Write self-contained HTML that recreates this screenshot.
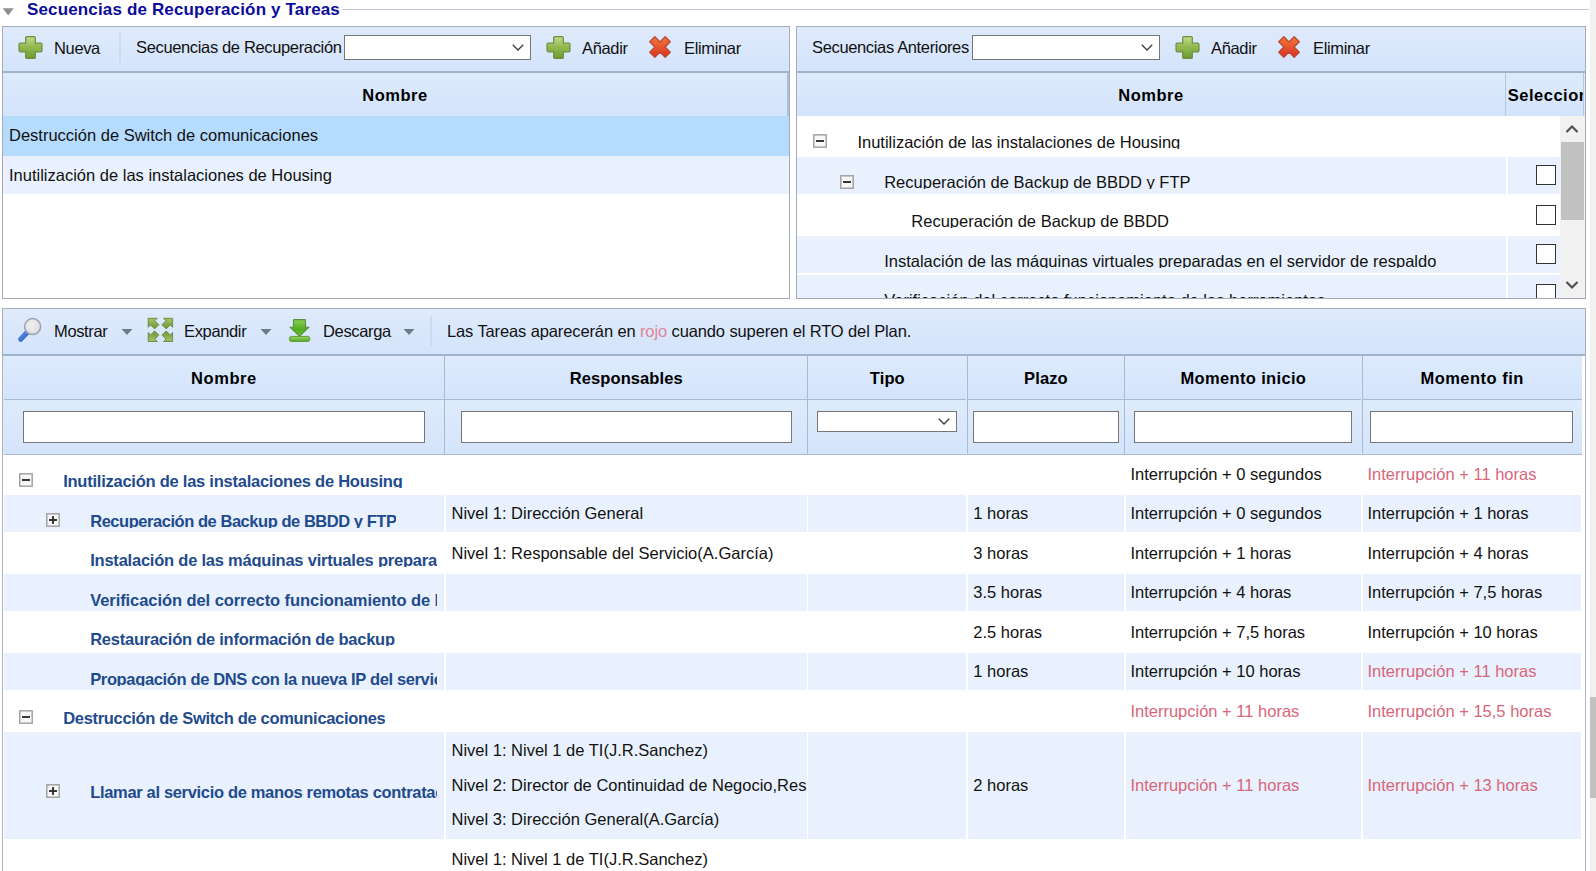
<!DOCTYPE html>
<html><head><meta charset="utf-8"><title>Secuencias</title>
<style>
*{box-sizing:border-box;margin:0;padding:0}
html,body{width:1596px;height:871px;overflow:hidden;background:#fff}
body{font-family:"Liberation Sans",sans-serif;font-size:16.5px;color:#000;position:relative}
.abs{position:absolute}
.tb{position:absolute;background:linear-gradient(#dfeafb,#d4e4fc);border:1px solid #a6adb9;}
.tbt{position:absolute;font-size:16.5px;color:#111;white-space:nowrap;letter-spacing:-0.35px;line-height:19px}
.hd{position:absolute;background:linear-gradient(#deebfd,#d3e3fb);font-weight:bold;font-size:16.5px;text-align:center;white-space:nowrap;color:#000}
.bg{position:absolute}
.alt{background:#e8f1fd}
.sel{background:#b5dcff}
.t{position:absolute;white-space:nowrap;font-size:16.5px;line-height:19px;color:#111}
.red{color:#d8667a}
.nm{position:absolute;white-space:nowrap;font-size:16.5px;line-height:19px;height:16px;font-weight:bold;color:#1f4b8e;overflow:hidden;letter-spacing:-0.28px}
.tr{position:absolute;white-space:nowrap;font-size:16.5px;line-height:19px;height:16px;color:#111;overflow:hidden}
.inp{position:absolute;background:#fff;border:1.5px solid #767676}
.cb{position:absolute;width:20px;height:20px;background:#fff;border:1.5px solid #333}
.pm{position:absolute;width:13.5px;height:13.5px;border:1.8px solid #959595;background:#f7f7f7}
.pm:before{content:"";position:absolute;left:1.8px;right:1.8px;top:4.1px;height:1.7px;background:#2a2a2a}
.pm.plus:after{content:"";position:absolute;top:1.8px;bottom:1.8px;left:4.1px;width:1.7px;background:#2a2a2a}
.vl{position:absolute;width:1.5px;background:#fff}
</style></head><body>

<div class="abs" style="left:0;top:8.7px;width:1589px;height:1.5px;background:#c3c9d4"></div>
<div class="abs" style="left:0;top:0;width:342px;height:22px;background:#fff"></div>
<svg class="abs" style="left:2px;top:7px" width="13" height="10"><path d="M0.7 1.3 L11.8 1.3 L6.25 8.5 Z" fill="#8f8f8f"/></svg>
<div class="abs" style="left:27px;top:0px;font-size:17px;line-height:20px;font-weight:bold;color:#0c0c9c;white-space:nowrap;letter-spacing:0.15px">Secuencias de Recuperación y Tareas</div>
<div class="abs" style="left:2px;top:25.5px;width:788px;height:273px;border:1px solid #a4abb7;background:#fff"></div>
<div class="tb" style="left:2px;top:25.5px;width:788px;height:47.5px;border-bottom:2px solid #9fb3cd"></div>
<div class="hd" style="left:3px;top:73px;width:786px;height:43px;line-height:44.5px;border-right:2px solid #a9bfdc;letter-spacing:0.55px">Nombre</div>
<div class="bg sel" style="left:3px;top:116px;width:786px;height:40px"></div><div class="t" style="left:9px;top:126px">Destrucción de Switch de comunicaciones</div>
<div class="bg alt" style="left:3px;top:156px;width:786px;height:38.2px"></div><div class="t" style="left:9px;top:166px">Inutilización de las instalaciones de Housing</div>
<svg class="abs" style="left:17px;top:34px;margin:0.5px" width="25" height="25" viewBox="0 0 26 26"><defs><linearGradient id="g1" x1="0" y1="0" x2="0" y2="1"><stop offset="0" stop-color="#c3df8c"/><stop offset="0.45" stop-color="#94bb52"/><stop offset="1" stop-color="#6c9a33"/></linearGradient></defs><path d="M9.3 1.6h7.4a1.3 1.3 0 0 1 1.3 1.3v5.6h5.6a1.3 1.3 0 0 1 1.3 1.3v6.4a1.3 1.3 0 0 1-1.3 1.3h-5.6v5.6a1.3 1.3 0 0 1-1.3 1.3h-7.4a1.3 1.3 0 0 1-1.3-1.3v-5.6h-5.6a1.3 1.3 0 0 1-1.3-1.3v-6.4a1.3 1.3 0 0 1 1.3-1.3h5.6v-5.6a1.3 1.3 0 0 1 1.3-1.3z" fill="url(#g1)" stroke="#6f8f40" stroke-width="1.3"/></svg>
<div class="tbt" style="left:54px;top:39px">Nueva</div>
<div class="abs" style="left:119px;top:33px;width:1.5px;height:30px;background:#cddaf0"></div>
<div class="tbt" style="left:136px;top:38px">Secuencias de Recuperación</div>
<div class="inp" style="left:344px;top:35px;width:187px;height:25px"></div><svg class="abs" style="left:511px;top:43px" width="14" height="9" viewBox="0 0 14 9"><path d="M1.8 1.8 L7 7 L12.2 1.8" fill="none" stroke="#3a3a3a" stroke-width="1.3"/></svg>
<svg class="abs" style="left:545px;top:34px;margin:0.5px" width="25" height="25" viewBox="0 0 26 26"><defs><linearGradient id="g2" x1="0" y1="0" x2="0" y2="1"><stop offset="0" stop-color="#c3df8c"/><stop offset="0.45" stop-color="#94bb52"/><stop offset="1" stop-color="#6c9a33"/></linearGradient></defs><path d="M9.3 1.6h7.4a1.3 1.3 0 0 1 1.3 1.3v5.6h5.6a1.3 1.3 0 0 1 1.3 1.3v6.4a1.3 1.3 0 0 1-1.3 1.3h-5.6v5.6a1.3 1.3 0 0 1-1.3 1.3h-7.4a1.3 1.3 0 0 1-1.3-1.3v-5.6h-5.6a1.3 1.3 0 0 1-1.3-1.3v-6.4a1.3 1.3 0 0 1 1.3-1.3h5.6v-5.6a1.3 1.3 0 0 1 1.3-1.3z" fill="url(#g2)" stroke="#6f8f40" stroke-width="1.3"/></svg>
<div class="tbt" style="left:582px;top:39px">Añadir</div>
<svg class="abs" style="left:647px;top:34px" width="26" height="26" viewBox="0 0 26 26"><defs><linearGradient id="r1" x1="0" y1="0" x2="0" y2="1"><stop offset="0" stop-color="#f07a3a"/><stop offset="0.5" stop-color="#e5562c"/><stop offset="1" stop-color="#d8301e"/></linearGradient></defs><path d="M18.16 2.75 L23.25 7.84 L18.09 13.00 L23.25 18.16 L18.16 23.25 L13.00 18.09 L7.84 23.25 L2.75 18.16 L7.91 13.00 L2.75 7.84 L7.84 2.75 L13.00 7.91 Z" fill="url(#r1)" stroke="#bd4a36" stroke-width="1.4" stroke-linejoin="round"/></svg>
<div class="tbt" style="left:684px;top:39px">Eliminar</div>
<div class="abs" style="left:796px;top:25.5px;width:790px;height:273px;border:1px solid #a4abb7;background:#fff"></div>
<div class="tb" style="left:796px;top:25.5px;width:790px;height:47.5px;border-bottom:2px solid #9fb3cd"></div>
<div class="hd" style="left:797px;top:73px;width:708px;height:43px;line-height:44.5px;letter-spacing:0.55px">Nombre</div>
<div class="hd" style="left:1504.8px;top:73px;width:79.5px;height:43px;line-height:44.5px;border-left:1.5px solid #b3c6e2;border-right:1.3px solid #b3c6e2;text-align:left;padding-left:2px;overflow:hidden;letter-spacing:0.5px">Seleccionar</div><div class="abs" style="left:1584.3px;top:73px;width:1px;height:43px;background:#dce8fa"></div>
<div class="tbt" style="left:812px;top:38px">Secuencias Anteriores</div>
<div class="inp" style="left:972px;top:35px;width:188px;height:25px"></div><svg class="abs" style="left:1140px;top:43px" width="14" height="9" viewBox="0 0 14 9"><path d="M1.8 1.8 L7 7 L12.2 1.8" fill="none" stroke="#3a3a3a" stroke-width="1.3"/></svg>
<svg class="abs" style="left:1174px;top:34px;margin:0.5px" width="25" height="25" viewBox="0 0 26 26"><defs><linearGradient id="g3" x1="0" y1="0" x2="0" y2="1"><stop offset="0" stop-color="#c3df8c"/><stop offset="0.45" stop-color="#94bb52"/><stop offset="1" stop-color="#6c9a33"/></linearGradient></defs><path d="M9.3 1.6h7.4a1.3 1.3 0 0 1 1.3 1.3v5.6h5.6a1.3 1.3 0 0 1 1.3 1.3v6.4a1.3 1.3 0 0 1-1.3 1.3h-5.6v5.6a1.3 1.3 0 0 1-1.3 1.3h-7.4a1.3 1.3 0 0 1-1.3-1.3v-5.6h-5.6a1.3 1.3 0 0 1-1.3-1.3v-6.4a1.3 1.3 0 0 1 1.3-1.3h5.6v-5.6a1.3 1.3 0 0 1 1.3-1.3z" fill="url(#g3)" stroke="#6f8f40" stroke-width="1.3"/></svg>
<div class="tbt" style="left:1211px;top:39px">Añadir</div>
<svg class="abs" style="left:1276px;top:34px" width="26" height="26" viewBox="0 0 26 26"><defs><linearGradient id="r2" x1="0" y1="0" x2="0" y2="1"><stop offset="0" stop-color="#f07a3a"/><stop offset="0.5" stop-color="#e5562c"/><stop offset="1" stop-color="#d8301e"/></linearGradient></defs><path d="M18.16 2.75 L23.25 7.84 L18.09 13.00 L23.25 18.16 L18.16 23.25 L13.00 18.09 L7.84 23.25 L2.75 18.16 L7.91 13.00 L2.75 7.84 L7.84 2.75 L13.00 7.91 Z" fill="url(#r2)" stroke="#bd4a36" stroke-width="1.4" stroke-linejoin="round"/></svg>
<div class="tbt" style="left:1313px;top:39px">Eliminar</div>
<div class="abs" style="left:797px;top:116px;width:788px;height:182.5px;overflow:hidden">
<div class="bg alt" style="left:0;top:41px;width:709px;height:37.3px"></div>
<div class="bg alt" style="left:710.5px;top:41px;width:52px;height:37.3px"></div>
<div class="bg alt" style="left:0;top:120px;width:709px;height:37.3px"></div>
<div class="bg alt" style="left:710.5px;top:120px;width:52px;height:37.3px"></div>
<div class="bg alt" style="left:0;top:159px;width:709px;height:37.3px"></div>
<div class="bg alt" style="left:710.5px;top:159px;width:52px;height:37.3px"></div>
<div class="tr" style="left:60.39999999999998px;top:16.80000000000001px">Inutilización de las instalaciones de Housing</div>
<div class="tr" style="left:87.20000000000005px;top:56.80000000000001px">Recuperación de Backup de BBDD y FTP</div>
<div class="tr" style="left:114.29999999999995px;top:95.80000000000001px">Recuperación de Backup de BBDD</div>
<div class="tr" style="left:87.20000000000005px;top:135.8px">Instalación de las máquinas virtuales preparadas en el servidor de respaldo</div>
<div class="tr" style="left:87.20000000000005px;top:175.40000000000003px">Verificación del correcto funcionamiento de las herramientas</div>
<svg class="abs" style="left:16.299999999999955px;top:18.30000000000001px" width="14" height="14" viewBox="0 0 14 14"><rect x="0.8" y="0.8" width="12.4" height="12.4" fill="#f7f7f7" stroke="#a0a0a0" stroke-width="1.45"/><rect x="3" y="6.05" width="8" height="1.9" fill="#2e2e2e"/></svg>
<svg class="abs" style="left:43.299999999999955px;top:58.5px" width="14" height="14" viewBox="0 0 14 14"><rect x="0.8" y="0.8" width="12.4" height="12.4" fill="#f7f7f7" stroke="#a0a0a0" stroke-width="1.45"/><rect x="3" y="6.05" width="8" height="1.9" fill="#2e2e2e"/></svg>
<div class="cb" style="left:739px;top:49px"></div>
<div class="cb" style="left:739px;top:89px"></div>
<div class="cb" style="left:739px;top:128px"></div>
<div class="cb" style="left:739px;top:167.7px"></div>
<div class="abs" style="left:763px;top:0;width:24.5px;height:182px;background:#f1f1f1"></div>
<div class="abs" style="left:763.5px;top:26px;width:23.5px;height:78px;background:#c1c1c1"></div>
<svg class="abs" style="left:768px;top:8px" width="14" height="10" viewBox="0 0 14 10"><path d="M1.5 8 L7 2.5 L12.5 8" fill="none" stroke="#505050" stroke-width="2.2"/></svg>
<svg class="abs" style="left:768px;top:164px" width="14" height="10" viewBox="0 0 14 10"><path d="M1.5 2 L7 7.5 L12.5 2" fill="none" stroke="#505050" stroke-width="2.2"/></svg>
</div>
<div class="abs" style="left:796px;top:297.5px;width:790px;height:1px;background:#a4abb7"></div>
<div class="abs" style="left:3px;top:354.5px;width:1579px;height:100px;background:#dbe7fa"></div>
<div class="tb" style="left:2px;top:308px;width:1584px;height:47.5px;border-bottom:2px solid #9fb3cd"></div>
<div class="tbt" style="left:54px;top:322px">Mostrar</div>
<div class="tbt" style="left:184px;top:322px">Expandir</div>
<div class="tbt" style="left:323px;top:322px">Descarga</div>
<div class="abs" style="left:430px;top:316px;width:1.5px;height:30px;background:#cddaf0"></div>
<div class="tbt" style="left:447px;top:322px;letter-spacing:-0.12px">Las Tareas aparecerán en <span style="color:#df8594">rojo</span> cuando superen el RTO del Plan.</div>
<svg class="abs" style="left:121px;top:328px" width="12" height="8"><path d="M0.5 1 L11.5 1 L6 7 Z" fill="#6a7a90"/></svg>
<svg class="abs" style="left:260px;top:328px" width="12" height="8"><path d="M0.5 1 L11.5 1 L6 7 Z" fill="#6a7a90"/></svg>
<svg class="abs" style="left:403px;top:328px" width="12" height="8"><path d="M0.5 1 L11.5 1 L6 7 Z" fill="#6a7a90"/></svg>
<svg class="abs" style="left:14px;top:314px" width="32" height="32" viewBox="14 314 32 32"><defs><radialGradient id="lens" cx="0.45" cy="0.4" r="0.6"><stop offset="0" stop-color="#f2f1f1"/><stop offset="1" stop-color="#dcdde2"/></radialGradient><linearGradient id="hnd" x1="0" y1="0" x2="1" y2="1"><stop offset="0" stop-color="#5b8fe6"/><stop offset="1" stop-color="#2f62c4"/></linearGradient></defs><path d="M27.2 332.4 L20.6 339.2" stroke="url(#hnd)" stroke-width="5.2" stroke-linecap="round" fill="none"/><circle cx="32.6" cy="326.6" r="8" fill="url(#lens)" stroke="#9aa2b0" stroke-width="1.5"/></svg>
<svg class="abs" style="left:146px;top:316px" width="30" height="28" viewBox="146 316 30 28"><defs><linearGradient id="ex" x1="0" y1="0" x2="0" y2="1"><stop offset="0" stop-color="#a5c46a"/><stop offset="1" stop-color="#6f9436"/></linearGradient></defs><g fill="url(#ex)" stroke="#68873a" stroke-width="0.9" stroke-linejoin="round"><path transform="translate(148.2 318.3)" d="M0 0 L9 0 L6.6 2.4 L10.6 6.4 L6.4 10.6 L2.4 6.6 L0 9 Z"/><path transform="translate(172.6 318.3) scale(-1 1)" d="M0 0 L9 0 L6.6 2.4 L10.6 6.4 L6.4 10.6 L2.4 6.6 L0 9 Z"/><path transform="translate(148.2 341.5) scale(1 -1)" d="M0 0 L9 0 L6.6 2.4 L10.6 6.4 L6.4 10.6 L2.4 6.6 L0 9 Z"/><path transform="translate(172.6 341.5) scale(-1 -1)" d="M0 0 L9 0 L6.6 2.4 L10.6 6.4 L6.4 10.6 L2.4 6.6 L0 9 Z"/></g></svg>
<svg class="abs" style="left:286px;top:316px" width="28" height="28" viewBox="286 316 28 28"><defs><linearGradient id="dl" x1="0" y1="0" x2="0" y2="1"><stop offset="0" stop-color="#8ed05a"/><stop offset="0.6" stop-color="#4fae1c"/><stop offset="1" stop-color="#6ec23c"/></linearGradient><linearGradient id="dlb" x1="0" y1="0" x2="0" y2="1"><stop offset="0" stop-color="#9ad865"/><stop offset="1" stop-color="#5aa52a"/></linearGradient></defs><path d="M294.3 319.6 h10.4 a0.8 0.8 0 0 1 0.8 0.8 v6.8 h3.6 l-9.6 9 l-9.6 -9 h3.6 v-6.8 a0.8 0.8 0 0 1 0.8 -0.8 z" fill="url(#dl)" stroke="#5a8f3a" stroke-width="1.1" stroke-linejoin="round"/><rect x="289.4" y="336.4" width="20.4" height="5" rx="2" fill="url(#dlb)" stroke="#5a9a30" stroke-width="1"/></svg>
<div class="abs" style="left:2px;top:355px;width:1583.5px;height:520px;border-left:1.5px solid #adb3bd;border-right:1.5px solid #adb8c8"></div>
<div class="hd" style="left:3.5px;top:355.5px;width:440.9px;height:44px;line-height:45px;border-bottom:1.5px solid #a9b9d0;letter-spacing:0.55px">Nombre</div>
<div class="abs" style="left:3.5px;top:399.5px;width:440.9px;height:55px;background:linear-gradient(#deebfc,#d4e4fb);border-bottom:1.5px solid #a9b9d0"></div>
<div class="hd" style="left:444.4px;top:355.5px;width:362.70000000000005px;height:44px;line-height:45px;border-left:1.5px solid #a9b9d0;border-bottom:1.5px solid #a9b9d0;letter-spacing:0.08px">Responsables</div>
<div class="abs" style="left:444.4px;top:399.5px;width:362.70000000000005px;height:55px;background:linear-gradient(#deebfc,#d4e4fb);border-left:1.5px solid #a9b9d0;border-bottom:1.5px solid #a9b9d0"></div>
<div class="hd" style="left:807.1px;top:355.5px;width:159.39999999999998px;height:44px;line-height:45px;border-left:1.5px solid #a9b9d0;border-bottom:1.5px solid #a9b9d0;letter-spacing:0.12px">Tipo</div>
<div class="abs" style="left:807.1px;top:399.5px;width:159.39999999999998px;height:55px;background:linear-gradient(#deebfc,#d4e4fb);border-left:1.5px solid #a9b9d0;border-bottom:1.5px solid #a9b9d0"></div>
<div class="hd" style="left:966.5px;top:355.5px;width:157.79999999999995px;height:44px;line-height:45px;border-left:1.5px solid #a9b9d0;border-bottom:1.5px solid #a9b9d0;letter-spacing:0.12px">Plazo</div>
<div class="abs" style="left:966.5px;top:399.5px;width:157.79999999999995px;height:55px;background:linear-gradient(#deebfc,#d4e4fb);border-left:1.5px solid #a9b9d0;border-bottom:1.5px solid #a9b9d0"></div>
<div class="hd" style="left:1124.3px;top:355.5px;width:237.20000000000005px;height:44px;line-height:45px;border-left:1.5px solid #a9b9d0;border-bottom:1.5px solid #a9b9d0;letter-spacing:0.34px">Momento inicio</div>
<div class="abs" style="left:1124.3px;top:399.5px;width:237.20000000000005px;height:55px;background:linear-gradient(#deebfc,#d4e4fb);border-left:1.5px solid #a9b9d0;border-bottom:1.5px solid #a9b9d0"></div>
<div class="hd" style="left:1361.5px;top:355.5px;width:220.29999999999995px;height:44px;line-height:45px;border-left:1.5px solid #a9b9d0;border-bottom:1.5px solid #a9b9d0;letter-spacing:0.49px">Momento fin</div>
<div class="abs" style="left:1361.5px;top:399.5px;width:220.29999999999995px;height:55px;background:linear-gradient(#deebfc,#d4e4fb);border-left:1.5px solid #a9b9d0;border-bottom:1.5px solid #a9b9d0"></div>
<div class="inp" style="left:23px;top:411px;width:402px;height:31.7px"></div>
<div class="inp" style="left:461.3px;top:411px;width:330.40000000000003px;height:31.7px"></div>
<div class="inp" style="left:973.3px;top:411px;width:145.4000000000001px;height:31.7px"></div>
<div class="inp" style="left:1134px;top:411px;width:217.79999999999995px;height:31.7px"></div>
<div class="inp" style="left:1370px;top:411px;width:202.79999999999995px;height:31.7px"></div>
<div class="inp" style="left:817.3px;top:411px;width:140.2px;height:20.5px"></div><svg class="abs" style="left:936.5px;top:417px" width="14" height="9" viewBox="0 0 14 9"><path d="M1.8 1.8 L7 7 L12.2 1.8" fill="none" stroke="#3a3a3a" stroke-width="1.3"/></svg>
<div class="bg alt" style="left:3.5px;top:494.7px;width:1577px;height:37.70000000000006px"></div>
<div class="vl" style="left:444.2px;top:494.7px;height:39.50000000000006px"></div>
<div class="vl" style="left:806.9px;top:494.7px;height:39.50000000000006px"></div>
<div class="vl" style="left:966.3px;top:494.7px;height:39.50000000000006px"></div>
<div class="vl" style="left:1124.1px;top:494.7px;height:39.50000000000006px"></div>
<div class="vl" style="left:1361.3px;top:494.7px;height:39.50000000000006px"></div>
<div class="bg alt" style="left:3.5px;top:573.9px;width:1577px;height:37.59999999999998px"></div>
<div class="vl" style="left:444.2px;top:573.9px;height:39.39999999999998px"></div>
<div class="vl" style="left:806.9px;top:573.9px;height:39.39999999999998px"></div>
<div class="vl" style="left:966.3px;top:573.9px;height:39.39999999999998px"></div>
<div class="vl" style="left:1124.1px;top:573.9px;height:39.39999999999998px"></div>
<div class="vl" style="left:1361.3px;top:573.9px;height:39.39999999999998px"></div>
<div class="bg alt" style="left:3.5px;top:652.8px;width:1577px;height:37.600000000000094px"></div>
<div class="vl" style="left:444.2px;top:652.8px;height:39.40000000000009px"></div>
<div class="vl" style="left:806.9px;top:652.8px;height:39.40000000000009px"></div>
<div class="vl" style="left:966.3px;top:652.8px;height:39.40000000000009px"></div>
<div class="vl" style="left:1124.1px;top:652.8px;height:39.40000000000009px"></div>
<div class="vl" style="left:1361.3px;top:652.8px;height:39.40000000000009px"></div>
<div class="bg alt" style="left:3.5px;top:731.9px;width:1577px;height:107.09999999999998px"></div>
<div class="vl" style="left:444.2px;top:731.9px;height:108.89999999999998px"></div>
<div class="vl" style="left:806.9px;top:731.9px;height:108.89999999999998px"></div>
<div class="vl" style="left:966.3px;top:731.9px;height:108.89999999999998px"></div>
<div class="vl" style="left:1124.1px;top:731.9px;height:108.89999999999998px"></div>
<div class="vl" style="left:1361.3px;top:731.9px;height:108.89999999999998px"></div>
<div class="nm" style="left:63.2px;top:471.8px;max-width:374.2px;letter-spacing:-0.243px">Inutilización de las instalaciones de Housing</div>
<div class="nm" style="left:90.2px;top:511.8px;max-width:347.2px;letter-spacing:-0.457px">Recuperación de Backup de BBDD y FTP</div>
<div class="nm" style="left:90.2px;top:551.1999999999999px;max-width:347.2px;letter-spacing:-0.223px">Instalación de las máquinas virtuales preparadas en el servidor de respaldo</div>
<div class="nm" style="left:90.2px;top:591.0999999999999px;max-width:347.2px;letter-spacing:-0.07px">Verificación del correcto funcionamiento de las herramientas</div>
<div class="nm" style="left:90.2px;top:629.8px;max-width:347.2px;letter-spacing:-0.243px">Restauración de información de backup</div>
<div class="nm" style="left:90.2px;top:669.5px;max-width:347.2px;letter-spacing:-0.356px">Propagación de DNS con la nueva IP del servicio</div>
<div class="nm" style="left:63.2px;top:708.9px;max-width:374.2px;letter-spacing:-0.318px">Destrucción de Switch de comunicaciones</div>
<div class="nm" style="left:90.2px;top:782.8px;max-width:347.2px;letter-spacing:-0.33px">Llamar al servicio de manos remotas contratado</div>
<svg class="abs" style="left:19.3px;top:473.2px" width="14" height="14" viewBox="0 0 14 14"><rect x="0.8" y="0.8" width="12.4" height="12.4" fill="#f7f7f7" stroke="#a0a0a0" stroke-width="1.45"/><rect x="3" y="6.05" width="8" height="1.9" fill="#2e2e2e"/></svg>
<svg class="abs" style="left:46.2px;top:513.1px" width="14" height="14" viewBox="0 0 14 14"><rect x="0.8" y="0.8" width="12.4" height="12.4" fill="#f7f7f7" stroke="#a0a0a0" stroke-width="1.45"/><rect x="3" y="6.05" width="8" height="1.9" fill="#2e2e2e"/><rect x="6.05" y="3.1" width="1.9" height="7.8" fill="#2e2e2e"/></svg>
<svg class="abs" style="left:19.3px;top:710.4px" width="14" height="14" viewBox="0 0 14 14"><rect x="0.8" y="0.8" width="12.4" height="12.4" fill="#f7f7f7" stroke="#a0a0a0" stroke-width="1.45"/><rect x="3" y="6.05" width="8" height="1.9" fill="#2e2e2e"/></svg>
<svg class="abs" style="left:46.2px;top:784.3px" width="14" height="14" viewBox="0 0 14 14"><rect x="0.8" y="0.8" width="12.4" height="12.4" fill="#f7f7f7" stroke="#a0a0a0" stroke-width="1.45"/><rect x="3" y="6.05" width="8" height="1.9" fill="#2e2e2e"/><rect x="6.05" y="3.1" width="1.9" height="7.8" fill="#2e2e2e"/></svg>
<div class="t" style="left:1130.4px;top:465.2px;">Interrupción + 0 segundos</div>
<div class="t red" style="left:1367.5px;top:465.2px;">Interrupción + 11 horas</div>
<div class="t" style="left:451.5px;top:503.8px;max-width:355px;overflow:hidden;">Nivel 1: Dirección General</div>
<div class="t" style="left:973.3px;top:503.8px;">1 horas</div>
<div class="t" style="left:1130.4px;top:503.8px;">Interrupción + 0 segundos</div>
<div class="t" style="left:1367.5px;top:503.8px;">Interrupción + 1 horas</div>
<div class="t" style="left:451.5px;top:543.5999999999999px;max-width:355px;overflow:hidden;">Nivel 1: Responsable del Servicio(A.García)</div>
<div class="t" style="left:973.3px;top:543.5999999999999px;">3 horas</div>
<div class="t" style="left:1130.4px;top:543.5999999999999px;">Interrupción + 1 horas</div>
<div class="t" style="left:1367.5px;top:543.5999999999999px;">Interrupción + 4 horas</div>
<div class="t" style="left:973.3px;top:582.8px;">3.5 horas</div>
<div class="t" style="left:1130.4px;top:582.8px;">Interrupción + 4 horas</div>
<div class="t" style="left:1367.5px;top:582.8px;">Interrupción + 7,5 horas</div>
<div class="t" style="left:973.3px;top:622.5px;">2.5 horas</div>
<div class="t" style="left:1130.4px;top:622.5px;">Interrupción + 7,5 horas</div>
<div class="t" style="left:1367.5px;top:622.5px;">Interrupción + 10 horas</div>
<div class="t" style="left:973.3px;top:662.0px;">1 horas</div>
<div class="t" style="left:1130.4px;top:662.0px;">Interrupción + 10 horas</div>
<div class="t red" style="left:1367.5px;top:662.0px;">Interrupción + 11 horas</div>
<div class="t red" style="left:1130.4px;top:701.5px;">Interrupción + 11 horas</div>
<div class="t red" style="left:1367.5px;top:701.5px;">Interrupción + 15,5 horas</div>
<div class="t" style="left:973.3px;top:775.5999999999999px;">2 horas</div>
<div class="t red" style="left:1130.4px;top:775.5999999999999px;">Interrupción + 11 horas</div>
<div class="t red" style="left:1367.5px;top:775.5999999999999px;">Interrupción + 13 horas</div>
<div class="t" style="left:451.5px;top:741.0px;">Nivel 1: Nivel 1 de TI(J.R.Sanchez)</div>
<div class="t" style="left:451.5px;top:775.5999999999999px;max-width:355px;overflow:hidden;">Nivel 2: Director de Continuidad de Negocio,Responsable</div>
<div class="t" style="left:451.5px;top:810.1999999999999px;">Nivel 3: Dirección General(A.García)</div>
<div class="t" style="left:451.5px;top:850.0px;">Nivel 1: Nivel 1 de TI(J.R.Sanchez)</div>
<div class="abs" style="left:1590.3px;top:0;width:6px;height:871px;background:#f1f1f1"></div>
<div class="abs" style="left:1590.3px;top:697px;width:6px;height:101px;background:#c1c1c1"></div>

</body></html>
